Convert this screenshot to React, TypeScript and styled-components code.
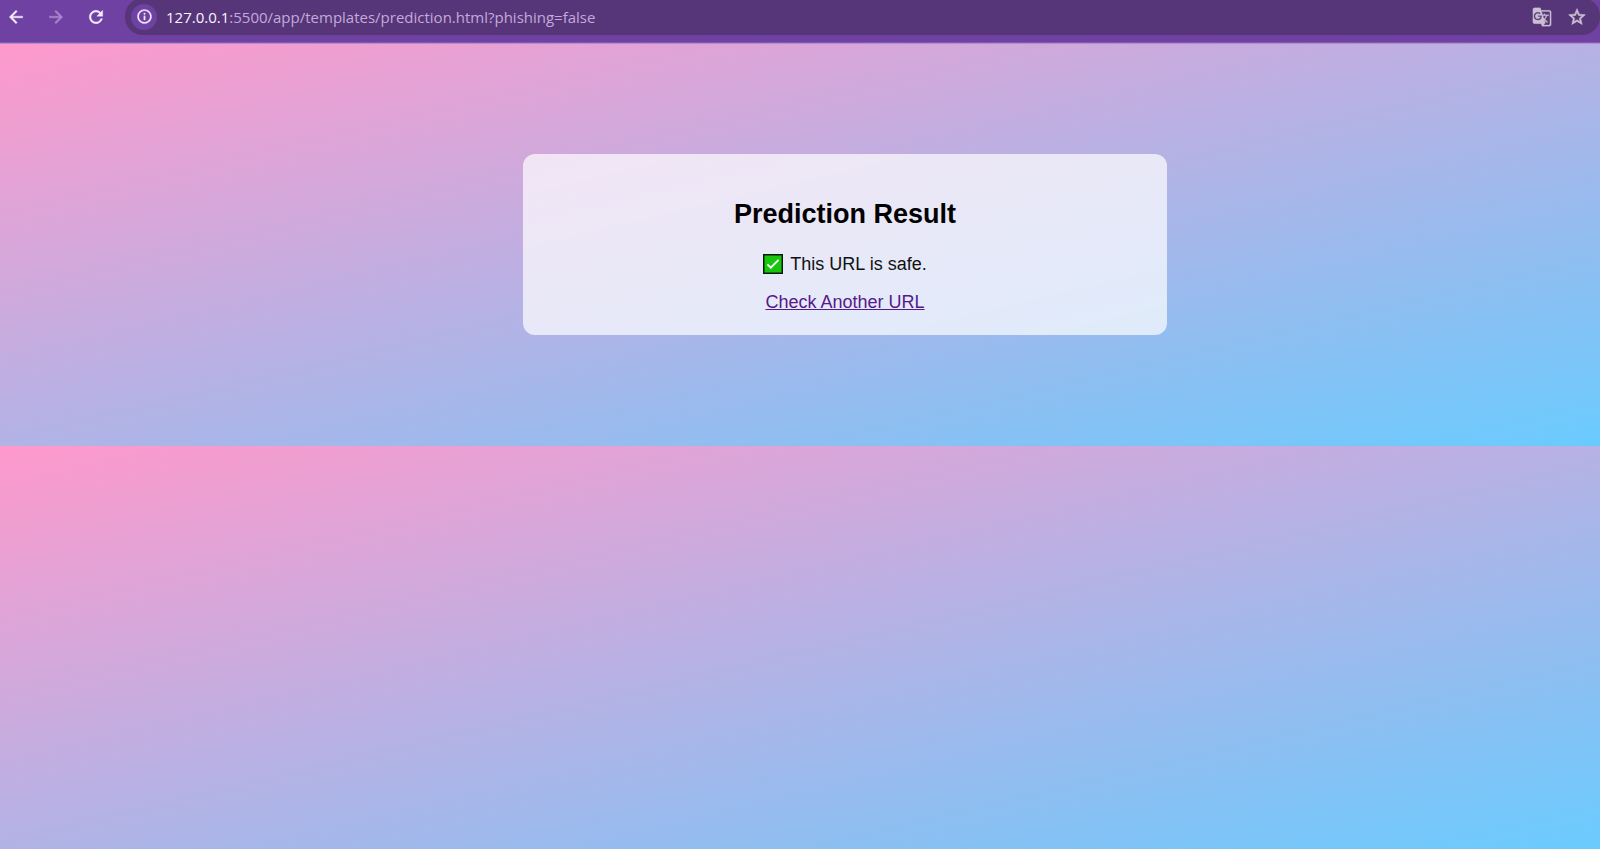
import React from "react";
import styled, { createGlobalStyle } from "styled-components";
import {
  MdArrowBack,
  MdArrowForward,
  MdRefresh,
  MdOutlineInfo,
  MdGTranslate,
  MdStarBorder,
} from "react-icons/md";

const GlobalStyle = createGlobalStyle`
  * { box-sizing: border-box; }
  body { margin: 0; overflow: hidden; }
`;

const Window = styled.div`
  display: flex;
  flex-direction: column;
  height: 100vh;
  overflow: hidden;
`;

const Toolbar = styled.header`
  position: relative;
  display: flex;
  align-items: flex-start;
  flex: none;
  height: 43px;
  padding-left: 6px;
  background: #6f41a2;
  border-bottom: 1px solid #8259b2;
  box-shadow: 0 1px 0 #b48dcb;
`;

const Navigation = styled.nav`
  display: flex;
  gap: 20px;
  padding-top: 7px;
  width: 119px;
  flex: none;
`;

const IconButton = styled.button<{ $size?: number; $weight?: number }>`
  display: flex;
  align-items: center;
  justify-content: center;
  flex: none;
  width: ${({ $size = 20 }) => $size}px;
  height: ${({ $size = 20 }) => $size}px;
  padding: 0;
  border: 0;
  background: none;
  color: #f6ecfd;

  path:not([fill="none"]) {
    stroke-width: ${({ $weight = 0.5 }) => $weight};
  }

  &:disabled {
    color: #a988cb;
  }
`;

const InfoButton = styled(IconButton)`
  border-radius: 50%;
  background: #6f41a2;
`;

const AddressBar = styled.div`
  display: flex;
  align-items: center;
  flex: 1;
  height: 37px;
  margin-top: -2px;
  padding: 0 13px 0 6px;
  border-radius: 18px;
  background: #563678;
`;

const AddressField = styled.label`
  display: grid;
  flex: 1;
  margin-left: 9px;
  font: 15px/24px "Open Sans", "Noto Sans", sans-serif;

  > * {
    grid-area: 1 / 1;
  }
`;

const AddressInput = styled.input`
  min-width: 0;
  padding: 0;
  border: 0;
  outline: 0;
  background: none;
  font: inherit;
  color: transparent;
`;

const AddressText = styled.span`
  color: #c4a9dc;
  pointer-events: none;
`;

const Host = styled.span`
  color: #fbf4ff;
`;

const BarActions = styled.div`
  display: flex;
  gap: 15px;

  button {
    color: #cbbfd2;
  }
`;

const Viewport = styled.div`
  flex: 1;
  min-height: 0;
  overflow: hidden;
`;

/* The document is wider than the window and its backdrop repeats every half height. */
const Document = styled.main`
  width: calc(100% + 90px);
  height: 100%;
  background: linear-gradient(to bottom right, #ff99cc, #66ccff) 0 0 / 100% 50%;
  font: 18px/22px "Liberation Sans", Arial, sans-serif;
  color: #111;
`;

const Stage = styled.div`
  display: flex;
  align-items: center;
  justify-content: center;
  height: 50%;
`;

const Card = styled.section`
  width: 644px;
  padding: 44px 24px 22px;
  border-radius: 12px;
  background: rgba(255, 255, 255, 0.7);
  text-align: center;
`;

const Title = styled.h2`
  margin: 0 0 22px;
  font-size: 27px;
  line-height: 33px;
  color: #000;
`;

const Message = styled.p`
  display: flex;
  align-items: center;
  justify-content: center;
  gap: 7px;
  margin: 0 0 16px;
`;

const ResultLink = styled.a`
  color: #551a8b;
`;

const CheckMark = () => (
  <svg width="20" height="20" viewBox="0 0 20 20" role="img" aria-label="Safe">
    <rect x="0.75" y="0.75" width="18.5" height="18.5" fill="#16c60c" stroke="#0b1c0e" strokeWidth="1.5" />
    <path d="M4.4 10.4 7.8 13.6 15.6 5.8" fill="none" stroke="#fff" strokeWidth="1.9" />
  </svg>
);

export default function App() {
  return (
    <>
      <GlobalStyle />
      <Window>
        <Toolbar>
          <Navigation>
            <IconButton aria-label="Back"><MdArrowBack size={20} /></IconButton>
            <IconButton aria-label="Forward" disabled><MdArrowForward size={20} /></IconButton>
            <IconButton aria-label="Reload"><MdRefresh size={20} /></IconButton>
          </Navigation>
          <AddressBar>
            <InfoButton $size={26} $weight={0.4} aria-label="Site information"><MdOutlineInfo size={17} /></InfoButton>
            <AddressField>
              <AddressInput aria-label="Address" />
              <AddressText>
                <Host>127.0.0.1</Host>:5500/app/templates/prediction.html?phishing=false
              </AddressText>
            </AddressField>
            <BarActions>
              <IconButton $weight={0.3} aria-label="Translate"><MdGTranslate size={20} /></IconButton>
              <IconButton $weight={0.7} aria-label="Bookmark"><MdStarBorder size={20} /></IconButton>
            </BarActions>
          </AddressBar>
        </Toolbar>
        <Viewport>
          <Document>
            <Stage>
              <Card>
                <Title>Prediction Result</Title>
                <Message><CheckMark />This URL is safe.</Message>
                <ResultLink href="#">Check Another URL</ResultLink>
              </Card>
            </Stage>
          </Document>
        </Viewport>
      </Window>
    </>
  );
}
